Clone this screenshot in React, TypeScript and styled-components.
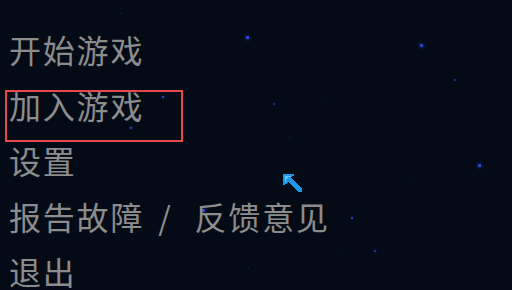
import styled, { createGlobalStyle } from "styled-components";

const GlobalStyle = createGlobalStyle`
  html, body {
    margin: 0;
    padding: 0;
    background: #040b16;
  }
`;

const Screen = styled.main`
  position: relative;
  width: 512px;
  height: 290px;
  overflow: hidden;
  background: #040b16;
  font-family: "Noto Sans CJK SC", "Noto Sans", sans-serif;
`;

const Sky = styled.div`
  position: absolute;
  inset: 0;
  pointer-events: none;
`;

const Star = styled.span<{ $size: number; $glow: number }>`
  position: absolute;
  width: ${({ $size }) => $size}px;
  height: ${({ $size }) => $size}px;
  background: rgba(50, 80, 230, ${({ $glow }) => $glow});
  box-shadow: 0 0 ${({ $size }) => $size + 1}px rgba(60, 90, 240, ${({ $glow }) => $glow * 0.8});
`;

const Menu = styled.ul`
  position: relative;
  list-style: none;
  margin: 0;
  padding: 34px 0 0 5px;
  display: flex;
  flex-direction: column;
  gap: 3.5px;
`;

const Item = styled.li<{ $selected?: boolean }>`
  box-sizing: border-box;
  width: 178px;
  height: 52px;
  border: 2px solid ${({ $selected }) => ($selected ? "#e34a4c" : "transparent")};
  padding-left: 2px;
  white-space: nowrap;
  color: #8c8c8c;
  font-size: 32px;
  line-height: 27px;
  letter-spacing: 1.8px;
`;

const Slash = styled.span`
  display: inline-block;
  margin: 0 22px 0 14px;
`;

const Cursor = styled.svg`
  position: absolute;
  left: 282px;
  top: 173px;
`;

const stars = [
  { x: 120, y: 13, s: 1, g: 0.4 },
  { x: 246, y: 36, s: 3, g: 0.9 },
  { x: 420, y: 44, s: 3, g: 0.85 },
  { x: 454, y: 79, s: 2, g: 0.5 },
  { x: 162, y: 96, s: 2, g: 0.8 },
  { x: 130, y: 127, s: 2, g: 0.7 },
  { x: 273, y: 103, s: 2, g: 0.45 },
  { x: 289, y: 137, s: 1, g: 0.4 },
  { x: 326, y: 98, s: 1, g: 0.25 },
  { x: 478, y: 164, s: 3, g: 0.85 },
  { x: 413, y: 181, s: 1, g: 0.25 },
  { x: 47, y: 151, s: 2, g: 0.6 },
  { x: 202, y: 209, s: 3, g: 0.85 },
  { x: 351, y: 217, s: 2, g: 0.8 },
  { x: 374, y: 250, s: 2, g: 0.6 },
  { x: 338, y: 250, s: 1, g: 0.35 },
  { x: 248, y: 267, s: 1, g: 0.35 },
];

export default function App() {
  return (
    <>
      <GlobalStyle />
      <Screen>
        <Sky>
          {stars.map((st, i) => (
            <Star
              key={i}
              $size={st.s}
              $glow={st.g}
              style={{ left: st.x, top: st.y }}
            />
          ))}
        </Sky>
        <Menu>
          <Item>开始游戏</Item>
          <Item $selected>加入游戏</Item>
          <Item>设置</Item>
          <Item>
            报告故障<Slash>/</Slash>反馈意见
          </Item>
          <Item>退出</Item>
        </Menu>
        <Cursor width="22" height="22" viewBox="0 0 22 22" shapeRendering="crispEdges">
          <path
            d="M1 1 H12 V3 H10 V4 H9 V5 H10 V6 H11 V7 H12 V8 H13 V9 H14 V10 H15 V11 H16 V12 H17 V13 H18 V14 H19 V15 H20 V19 H16 V18 H15 V17 H14 V16 H13 V15 H12 V14 H11 V13 H10 V12 H9 V11 H8 V10 H7 V9 H6 V10 H5 V11 H3 V12 H1 Z"
            fill="#2196e6"
          />
          <path d="M3 3 H9 V4 H6 V5 H5 V6 H4 V9 H3 Z" fill="#5cc6ff" />
        </Cursor>
      </Screen>
    </>
  );
}
